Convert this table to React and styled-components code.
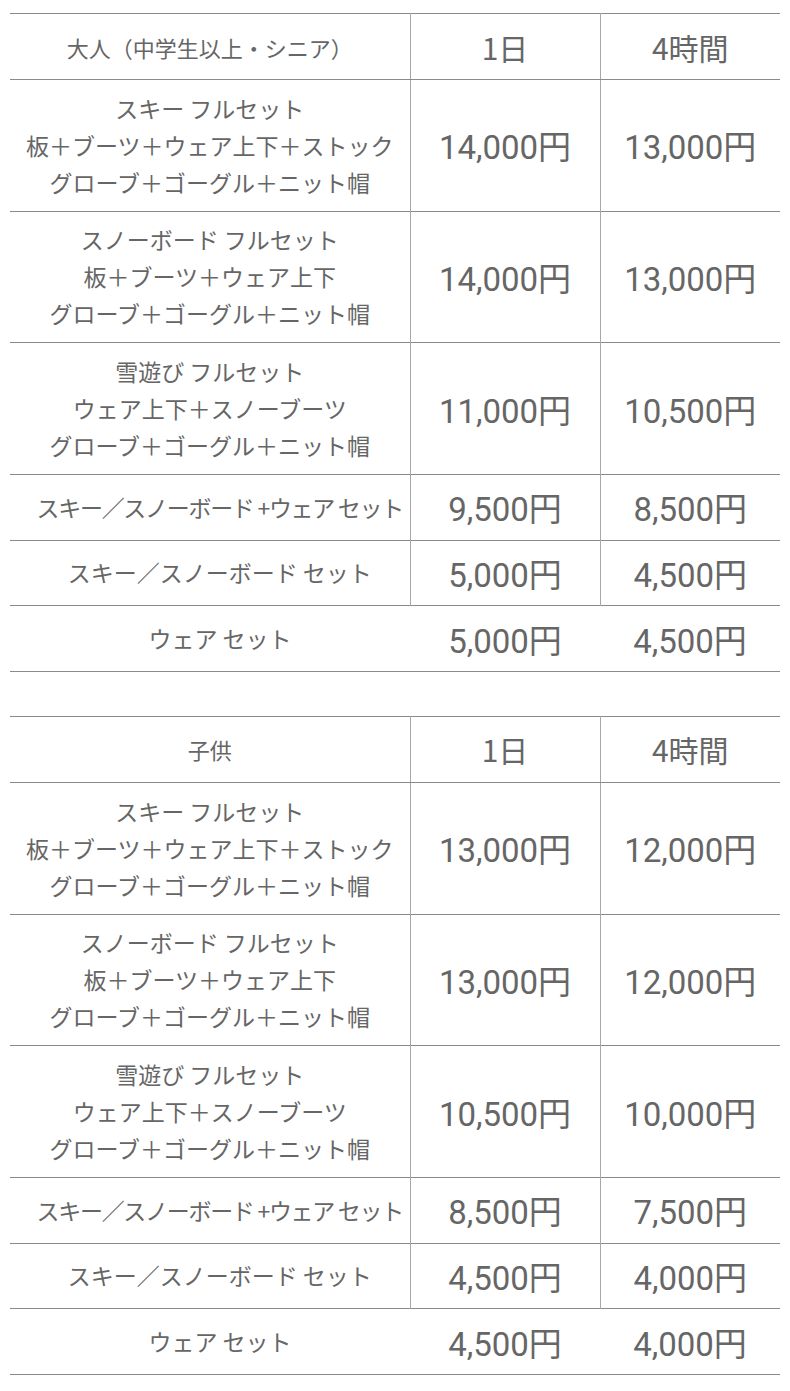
import styled, { createGlobalStyle } from "styled-components";

const GlobalStyle = createGlobalStyle`
  body {
    margin: 0;
    background: #ffffff;
    font-family: "Noto Sans CJK JP", "Noto Sans", sans-serif;
    color: #666666;
  }
`;

const adult = {
  title: "大人（中学生以上・シニア）",
  rows: [
    { name: ["スキー フルセット", "板＋ブーツ＋ウェア上下＋ストック", "グローブ＋ゴーグル＋ニット帽"], day: "14,000円", half: "13,000円" },
    { name: ["スノーボード フルセット", "板＋ブーツ＋ウェア上下", "グローブ＋ゴーグル＋ニット帽"], day: "14,000円", half: "13,000円" },
    { name: ["雪遊び フルセット", "ウェア上下＋スノーブーツ", "グローブ＋ゴーグル＋ニット帽"], day: "11,000円", half: "10,500円" },
    { name: ["スキー／スノーボード +ウェア セット"], day: "9,500円", half: "8,500円", tight: true },
    { name: ["スキー／スノーボード セット"], day: "5,000円", half: "4,500円" },
    { name: ["ウェア セット"], day: "5,000円", half: "4,500円", plain: true },
  ],
};

const child = {
  title: "子供",
  rows: [
    { name: ["スキー フルセット", "板＋ブーツ＋ウェア上下＋ストック", "グローブ＋ゴーグル＋ニット帽"], day: "13,000円", half: "12,000円" },
    { name: ["スノーボード フルセット", "板＋ブーツ＋ウェア上下", "グローブ＋ゴーグル＋ニット帽"], day: "13,000円", half: "12,000円" },
    { name: ["雪遊び フルセット", "ウェア上下＋スノーブーツ", "グローブ＋ゴーグル＋ニット帽"], day: "10,500円", half: "10,000円" },
    { name: ["スキー／スノーボード +ウェア セット"], day: "8,500円", half: "7,500円", tight: true },
    { name: ["スキー／スノーボード セット"], day: "4,500円", half: "4,000円" },
    { name: ["ウェア セット"], day: "4,500円", half: "4,000円", plain: true },
  ],
};

function PriceTable({ data }) {
  return (
    <Table>
      <colgroup>
        <col style={{ width: 400 }} />
        <col style={{ width: 190 }} />
        <col style={{ width: 180 }} />
      </colgroup>
      <thead>
        <tr>
          <HeadName>{data.title}</HeadName>
          <HeadCell>1日</HeadCell>
          <HeadCell $last>4時間</HeadCell>
        </tr>
      </thead>
      <tbody>
        {data.rows.map((row, i) => {
          const tall = row.name.length > 1;
          return (
            <Row key={i} $tall={tall}>
              <NameCell $plain={row.plain} $single={!tall} $tight={row.tight}>
                {row.name.map((line, j) => (
                  <Line key={j}>{line}</Line>
                ))}
              </NameCell>
              <PriceCell $plain={row.plain}>{row.day}</PriceCell>
              <PriceCell $plain $last>{row.half}</PriceCell>
            </Row>
          );
        })}
      </tbody>
    </Table>
  );
}

export default function App() {
  return (
    <>
      <GlobalStyle />
      <Page>
        <PriceTable data={adult} />
        <PriceTable data={child} />
      </Page>
    </>
  );
}

const Page = styled.div`
  display: flex;
  flex-direction: column;
  gap: 44px;
  padding: 13px 10px 18px;
`;

const Table = styled.table`
  width: 770px;
  border-collapse: collapse;
  table-layout: fixed;
  border-top: 1px solid #8a8a8a;
`;

const Row = styled.tr`
  height: ${(p) => (p.$tall ? "131.67px" : "65.67px")};
  border-bottom: 1px solid #8a8a8a;
`;

const HeadName = styled.th`
  height: 65px;
  padding: 0;
  font-weight: 400;
  font-size: 22px;
  color: #666666;
  text-align: center;
  border-bottom: 1px solid #8a8a8a;
  border-right: 1px solid #a8a8a8;
`;

const HeadCell = styled.th`
  padding: 0;
  font-weight: 400;
  font-size: 30px;
  color: #666666;
  text-align: center;
  border-bottom: 1px solid #8a8a8a;
  border-right: ${(p) => (p.$last ? "none" : "1px solid #a8a8a8")};
`;

const NameCell = styled.td`
  padding: ${(p) => (p.$single ? "0 0 0 20px" : "0")};
  text-align: center;
  font-size: 23px;
  line-height: 37px;
  letter-spacing: ${(p) => (p.$tight ? "-1.3px" : "normal")};
  border-right: ${(p) => (p.$plain ? "none" : "1px solid #a8a8a8")};
`;

const Line = styled.div`
  white-space: nowrap;
`;

const PriceCell = styled.td`
  padding: 0;
  text-align: center;
  font-family: Roboto, "Noto Sans CJK JP", sans-serif;
  font-size: 33px;
  border-right: ${(p) => (p.$plain ? "none" : "1px solid #a8a8a8")};
`;
